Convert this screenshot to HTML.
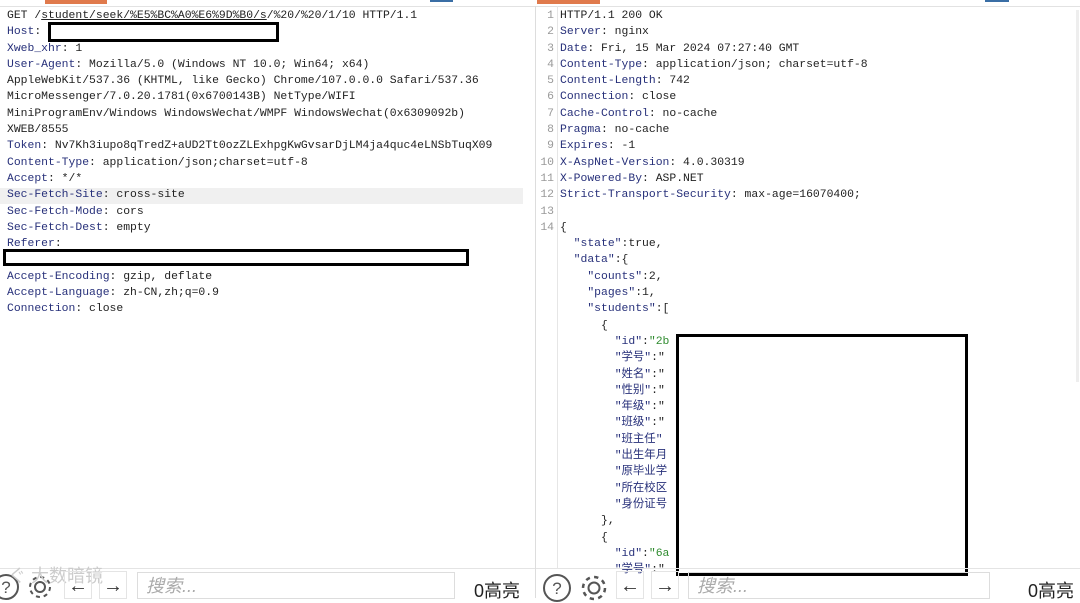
<!DOCTYPE html>
<html><head><meta charset="utf-8"><style>
body{margin:0;width:1080px;height:598px;overflow:hidden;background:#fff;position:relative;font-family:"Liberation Mono","Noto Sans CJK SC",monospace;}
.code{position:absolute;font-size:11.4px;line-height:16.3px;color:#222;white-space:pre;}
.k{color:#27307a}
.s{color:#2e8b2e}
.ln{position:absolute;font-size:11.4px;line-height:16.3px;color:#999;text-align:right;width:18px;white-space:pre;}
.box{position:absolute;border:3px solid #000;background:#fff;box-sizing:border-box;}
.bar{position:absolute;top:568px;height:30px;border-top:1px solid #e4e4e4;font-family:"Liberation Sans","Noto Sans CJK SC",sans-serif;}
.ic{position:absolute;top:4px;}
.btn{position:absolute;top:2px;width:28px;height:28px;border:1px solid #e4e4e4;box-sizing:border-box;}
.inp{position:absolute;top:3px;height:27px;border:1px solid #ddd;box-sizing:border-box;font-style:italic;color:#aaa;font-size:18px;padding-left:8px;line-height:27px;}
.cnt{position:absolute;top:8px;font-size:18px;color:#222;}
</style></head><body>
<div style="position:absolute;left:0;top:6px;width:1080px;height:1px;background:#e2e2e2"></div>
<div style="position:absolute;left:45px;top:0;width:62px;height:4px;background:#e07a4c"></div>
<div style="position:absolute;left:537px;top:0;width:63px;height:4px;background:#e07a4c"></div>
<div style="position:absolute;left:430px;top:0;width:23px;height:2px;background:#3a6ea5"></div>
<div style="position:absolute;left:985px;top:0;width:24px;height:2px;background:#3a6ea5"></div>
<div style="position:absolute;left:535px;top:6px;width:1px;height:592px;background:#ddd"></div>
<div style="position:absolute;left:557px;top:6px;width:1px;height:562px;background:#e6e6e6"></div>
<div style="position:absolute;left:0;top:188px;width:523px;height:16px;background:#f0f0f0"></div>
<div style="position:absolute;left:1076px;top:10px;width:3px;height:372px;background:#eee"></div>

<div class="code" style="left:7px;top:8px"><span>GET /<u>student/seek/%E5%BC%A0%E6%9D%B0/s</u>/%20/%20/1/10 HTTP/1.1</span>
<span class="k">Host</span>: 
<span class="k">Xweb_xhr</span>: 1
<span class="k">User-Agent</span>: Mozilla/5.0 (Windows NT 10.0; Win64; x64)
AppleWebKit/537.36 (KHTML, like Gecko) Chrome/107.0.0.0 Safari/537.36
MicroMessenger/7.0.20.1781(0x6700143B) NetType/WIFI
MiniProgramEnv/Windows WindowsWechat/WMPF WindowsWechat(0x6309092b)
XWEB/8555
<span class="k">Token</span>: Nv7Kh3iupo8qTredZ+aUD2Tt0ozZLExhpgKwGvsarDjLM4ja4quc4eLNSbTuqX09
<span class="k">Content-Type</span>: application/json;charset=utf-8
<span class="k">Accept</span>: */*
<span class="k">Sec-Fetch-Site</span>: cross-site
<span class="k">Sec-Fetch-Mode</span>: cors
<span class="k">Sec-Fetch-Dest</span>: empty
<span class="k">Referer</span>:

<span class="k">Accept-Encoding</span>: gzip, deflate
<span class="k">Accept-Language</span>: zh-CN,zh;q=0.9
<span class="k">Connection</span>: close</div>
<div class="box" style="left:48px;top:22px;width:231px;height:20px"></div>
<div class="box" style="left:3px;top:249px;width:466px;height:17px"></div>

<div class="ln" style="left:536px;top:8px">1
2
3
4
5
6
7
8
9
10
11
12
13
14</div>
<div class="code" style="left:560px;top:8px">HTTP/1.1 200 OK
<span class="k">Server</span>: nginx
<span class="k">Date</span>: Fri, 15 Mar 2024 07:27:40 GMT
<span class="k">Content-Type</span>: application/json; charset=utf-8
<span class="k">Content-Length</span>: 742
<span class="k">Connection</span>: close
<span class="k">Cache-Control</span>: no-cache
<span class="k">Pragma</span>: no-cache
<span class="k">Expires</span>: -1
<span class="k">X-AspNet-Version</span>: 4.0.30319
<span class="k">X-Powered-By</span>: ASP.NET
<span class="k">Strict-Transport-Security</span>: max-age=16070400;

{
  <span class="k">"state"</span>:true,
  <span class="k">"data"</span>:{
    <span class="k">"counts"</span>:2,
    <span class="k">"pages"</span>:1,
    <span class="k">"students"</span>:[
      {
        <span class="k">"id"</span>:<span class="s">"2b</span>
        <span class="k">"学号"</span>:"
        <span class="k">"姓名"</span>:"
        <span class="k">"性别"</span>:"
        <span class="k">"年级"</span>:"
        <span class="k">"班级"</span>:"
        <span class="k">"班主任"</span>
        <span class="k">"出生年月</span>
        <span class="k">"原毕业学</span>
        <span class="k">"所在校区</span>
        <span class="k">"身份证号</span>
      },
      {
        <span class="k">"id"</span>:<span class="s">"6a</span>
        <span class="k">"学号"</span>:"</div>
<div class="box" style="left:676px;top:334px;width:292px;height:242px"></div>

<div class="bar" style="left:0;width:535px">
<svg class="ic" style="left:-8px" width="28" height="28" viewBox="0 0 28 28"><circle cx="14" cy="14" r="12" fill="none" stroke="#555" stroke-width="2"/><text x="14" y="20" font-size="17" text-anchor="middle" fill="#555" font-family="Liberation Sans">?</text></svg>
<svg class="ic" style="left:26px" width="28" height="28" viewBox="0 0 28 28"><circle cx="14" cy="14" r="5" fill="none" stroke="#555" stroke-width="2"/><circle cx="14" cy="14" r="10" fill="none" stroke="#555" stroke-width="2" stroke-dasharray="4 3.85"/></svg>
<div style="position:absolute;left:8px;top:-7px;font-size:18px;color:#ccc">ぐ 大数暗镜</div>
<div class="btn" style="left:64px"></div><div class="btn" style="left:99px"></div>
<div style="position:absolute;left:68px;top:6px;font-size:20px;color:#333">←</div>
<div style="position:absolute;left:103px;top:6px;font-size:20px;color:#333">→</div>
<div class="inp" style="left:137px;width:318px">搜索...</div>
<div class="cnt" style="left:474px">0高亮</div>
</div>
<div class="bar" style="left:536px;width:544px">
<svg class="ic" style="left:6px" width="30" height="30" viewBox="0 0 30 30"><circle cx="15" cy="15" r="13" fill="none" stroke="#555" stroke-width="2"/><text x="15" y="21" font-size="17" text-anchor="middle" fill="#555" font-family="Liberation Sans">?</text></svg>
<svg class="ic" style="left:43px" width="30" height="30" viewBox="0 0 30 30"><circle cx="15" cy="15" r="5.5" fill="none" stroke="#555" stroke-width="2"/><circle cx="15" cy="15" r="11" fill="none" stroke="#555" stroke-width="2.5" stroke-dasharray="4.3 4.3"/></svg>
<div class="btn" style="left:80px"></div><div class="btn" style="left:115px"></div>
<div style="position:absolute;left:84px;top:6px;font-size:20px;color:#333">←</div>
<div style="position:absolute;left:119px;top:6px;font-size:20px;color:#333">→</div>
<div class="inp" style="left:152px;width:302px">搜索...</div>
<div class="cnt" style="left:492px">0高亮</div>
</div>
</body></html>
